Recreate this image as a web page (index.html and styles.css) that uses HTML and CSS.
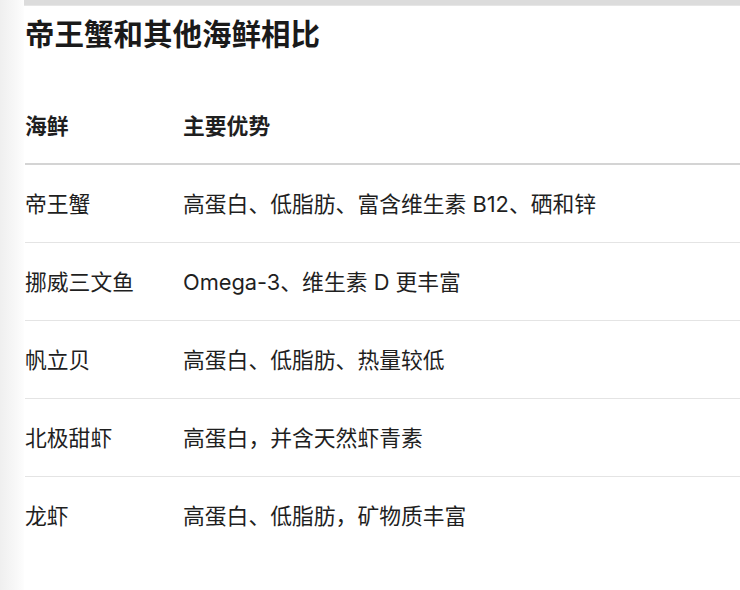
FILE: index.html
```html
<!DOCTYPE html>
<html lang="zh-CN">
<head>
<meta charset="utf-8">
<link rel="stylesheet" href="styles.css">
</head>
<body>
<div class="page">
  <div class="shade"></div>
  <main class="main">
    <div class="topbar"></div>
    <h1 class="title">帝王蟹和其他海鲜相比</h1>
    <table class="cmp">
      <thead>
        <tr><th class="c1">海鲜</th><th>主要优势</th></tr>
      </thead>
      <tbody>
        <tr><td class="c1">帝王蟹</td><td>高蛋白、低脂肪、富含维生素 B12、硒和锌</td></tr>
        <tr><td class="c1">挪威三文鱼</td><td>Omega-3、维生素 D 更丰富</td></tr>
        <tr><td class="c1">帆立贝</td><td>高蛋白、低脂肪、热量较低</td></tr>
        <tr><td class="c1">北极甜虾</td><td>高蛋白，并含天然虾青素</td></tr>
        <tr><td class="c1">龙虾</td><td>高蛋白、低脂肪，矿物质丰富</td></tr>
      </tbody>
    </table>
  </main>
</div>
</body>
</html>
```
FILE: styles.css
```css
html, body {
  margin: 0;
  padding: 0;
  background: #ffffff;
}
body {
  font-family: "Inter", "Noto Sans CJK SC", sans-serif;
  color: #1f1f1f;
  overflow: hidden;
}
.page {
  display: flex;
  width: 740px;
  height: 590px;
}
.shade {
  flex: 0 0 24px;
  background: linear-gradient(to right, #efefef, #f7f7f7 60%, #fdfdfd);
}
.main {
  flex: 1;
  min-width: 0;
  padding-left: 1px;
}
.topbar {
  height: 5px;
  background: #dcdcdc;
  border-bottom: 1px solid #e6e6e6;
  margin-left: -1px;
}
.title {
  margin: 8px 0 0;
  font-size: 29.5px;
  line-height: 40px;
  font-weight: 700;
  color: #1a1a1a;
}
.cmp {
  margin-top: 33px;
  width: 100%;
  border-collapse: collapse;
  font-size: 21.8px;
}
.cmp th, .cmp td {
  text-align: left;
  padding: 24px 0 23px;
  line-height: 30px;
  vertical-align: middle;
}
.cmp th {
  font-weight: 700;
  border-bottom: 2px solid #d4d4d4;
  padding-bottom: 22px;
}
.cmp td {
  font-weight: 400;
  border-bottom: 1px solid #e4e4e4;
}
.cmp tbody tr:last-child td {
  border-bottom: none;
}
.cmp .c1 {
  width: 158px;
}
```
